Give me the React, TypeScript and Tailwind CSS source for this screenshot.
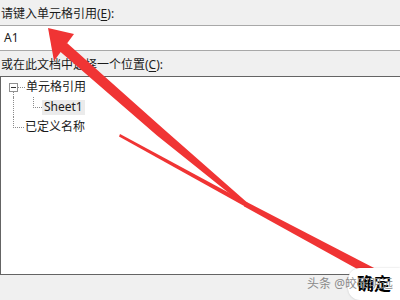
import type { ReactNode } from 'react';

const dot = 'border-dotted border-[#8c8c8c]';

function Label({ children }: { children: ReactNode }) {
  return <div className="flex h-[25px] items-center pl-[1px] pt-[2px]">{children}</div>;
}

function Arrows() {
  return (
    <svg className="pointer-events-none absolute left-0 top-0" width="400" height="300" viewBox="0 0 400 300">
      <g fill="#f03434">
        {/* head */}
        <polygon points="48,28 74,34 54,61" />
        {/* upper shaft */}
        <polygon points="67,43 163,128.6 248.3,203.5 245.7,206.5 157,135.4 59.5,51" />
        {/* thin return stroke */}
        <polygon points="120,134 247,202.5 245,206.5 119,136.5" />
        {/* lower shaft */}
        <polygon points="246.2,201.8 374.1,268 369.9,276 243.8,206.2" />
      </g>
    </svg>
  );
}

export default function App() {
  return (
    <div className="relative h-[300px] w-[400px] overflow-hidden bg-[#f0f0f0] font-[family-name:'Noto_Sans','Noto_Sans_CJK_SC',sans-serif] text-[12px] text-[#1b1b1b]">
      <Label>
        请键入单元格引用(<span className="underline underline-offset-2">E</span>):
      </Label>
      <div className="flex h-[26px] items-center border-y border-[#a8a8a8] bg-white pl-[4px]">A1</div>
      <Label>
        或在此文档中选择一个位置(<span className="underline underline-offset-2">C</span>):
      </Label>

      <div className="h-[199px] border border-r-0 border-[#646464] bg-white">
        {/* 单元格引用 */}
        <div className="flex h-[20px]">
          <div className="w-[8px]" />
          <div className="flex w-[9px] flex-col items-center">
            <div className="h-[6px]" />
            <div className="flex h-[9px] w-[9px] items-center justify-center border border-[#919191]">
              <div className="h-px w-[5px] bg-[#333]" />
            </div>
            <div className={`flex-1 border-l ${dot}`} />
          </div>
          <div className="flex w-[7px] items-center pt-[1px]">
            <div className={`w-full border-t ${dot}`} />
          </div>
          <div className="flex items-center pl-[1px]">单元格引用</div>
        </div>
        {/* Sheet1 */}
        <div className="flex h-[20px]">
          <div className="w-[12px]" />
          <div className={`w-[20px] border-l ${dot}`} />
          <div className={`h-[11px] w-[9px] border-b border-l ${dot}`} />
          <div className="flex items-center">
            <span className="flex h-[15px] items-center bg-[#ebebeb] px-[2px]">Sheet1</span>
          </div>
        </div>
        {/* 已定义名称 */}
        <div className="flex h-[20px]">
          <div className="w-[12px]" />
          <div className={`h-[11px] w-[11px] border-b border-l ${dot}`} />
          <div className="flex items-center pl-[1px]">已定义名称</div>
        </div>
      </div>

      <div className="h-[25px]" />

      <Arrows />

      <div className="absolute bottom-0 right-0 flex h-[32px] w-[52px] items-center rounded-l-[12px] bg-white pl-[9px] text-[17px] font-bold text-black shadow-[0_0_2px_rgba(0,0,0,0.2)]">
        确定
      </div>
      <div className="absolute bottom-[7px] right-[7px] text-[12px] text-[#8a8a8a]">头条 @皎昭明远</div>
    </div>
  );
}
